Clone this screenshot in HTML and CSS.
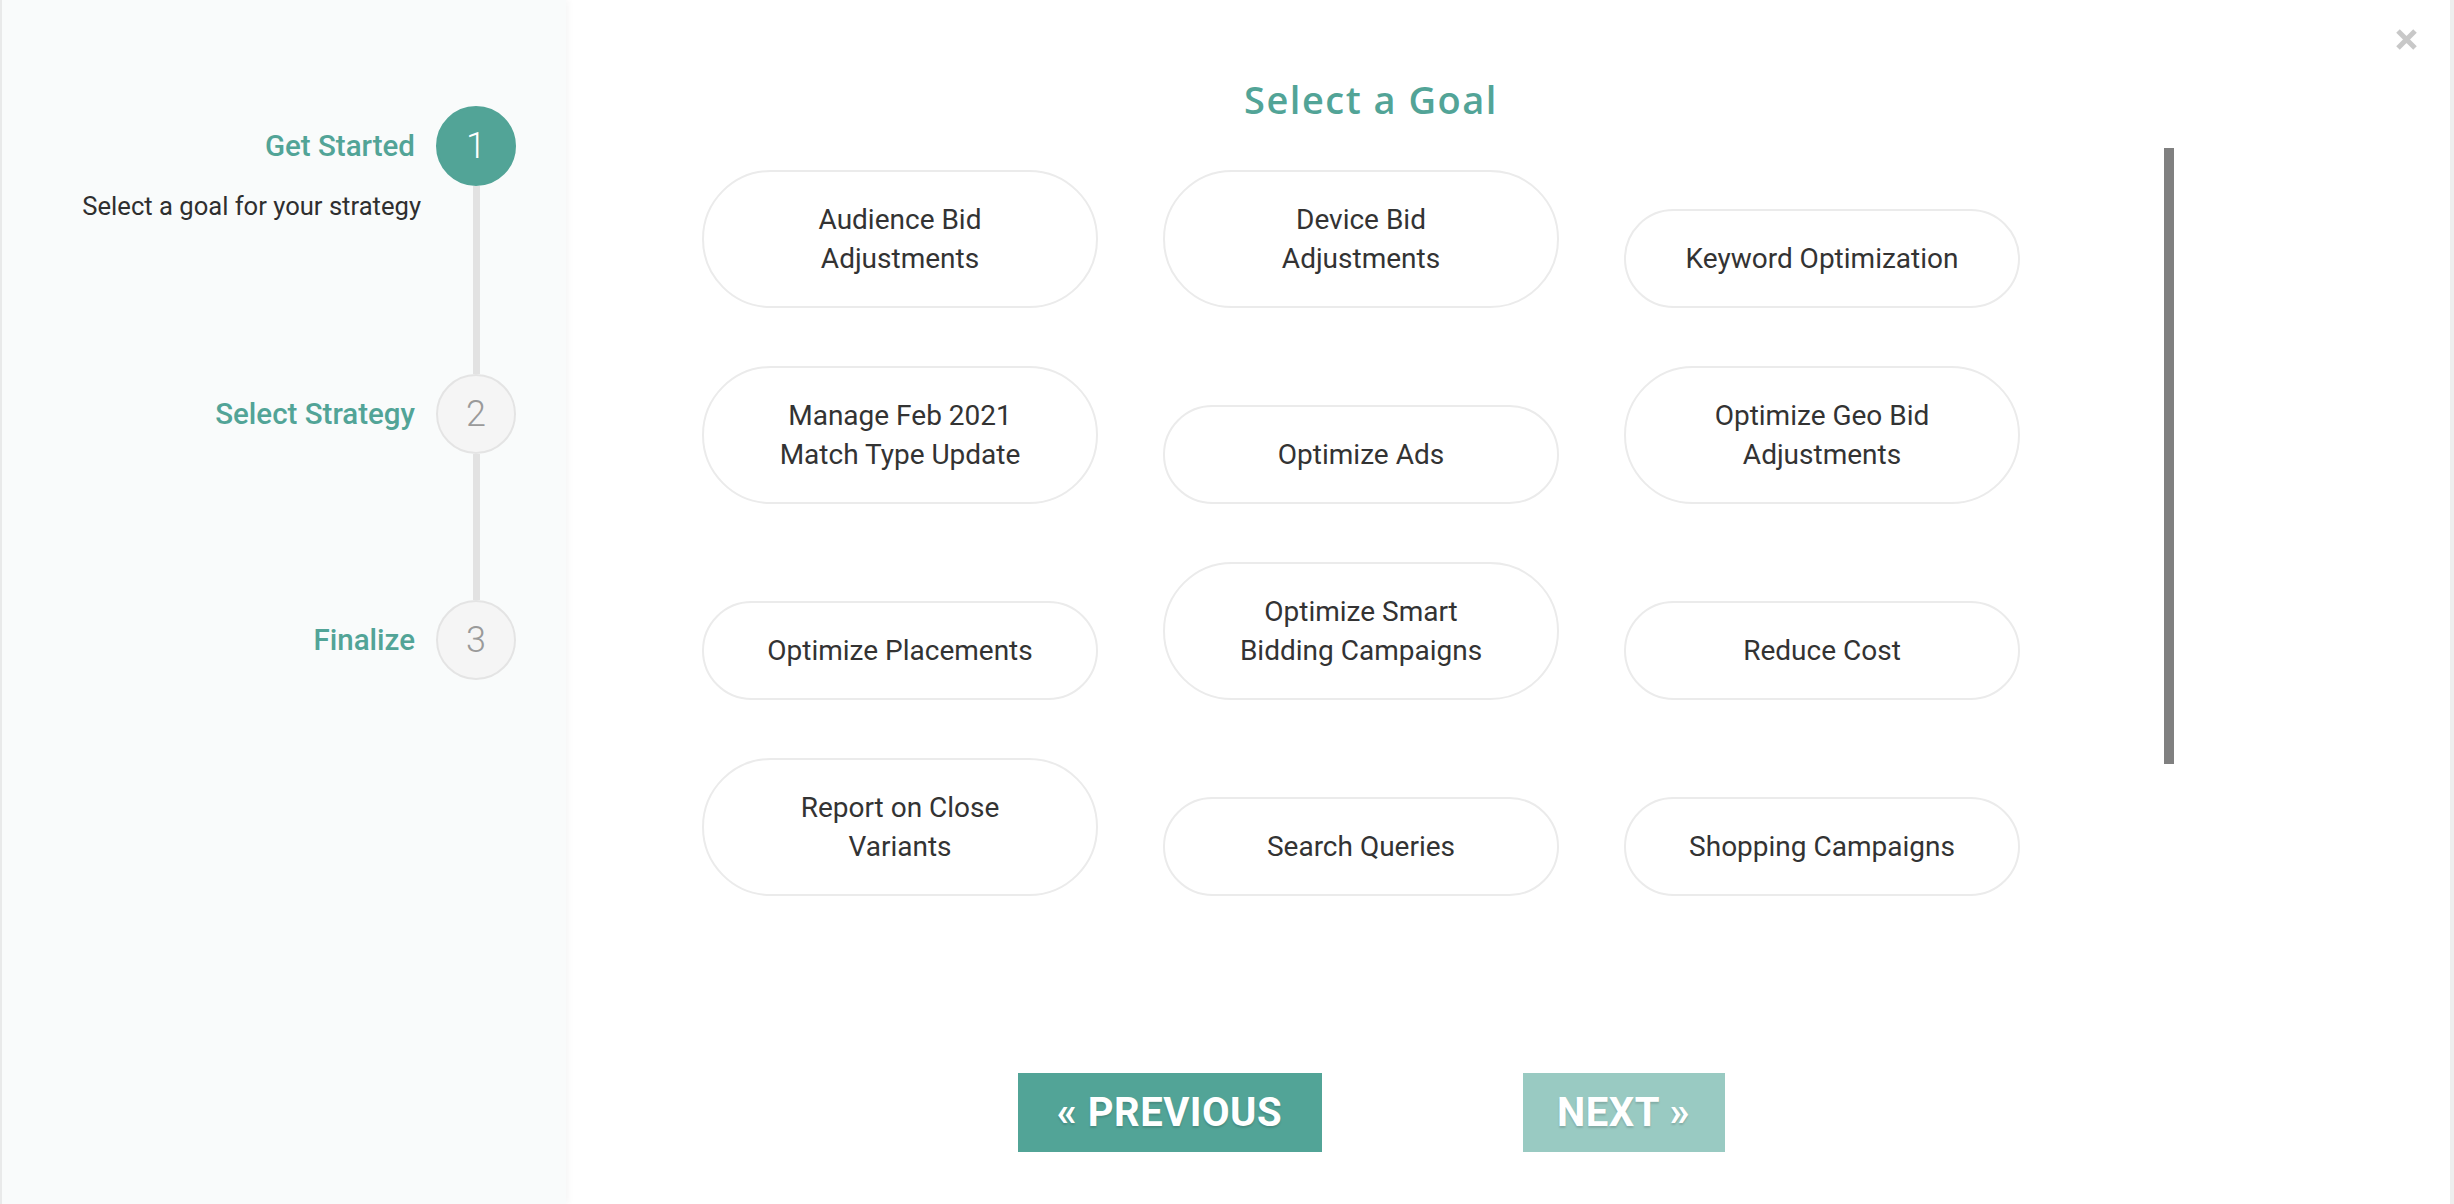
FILE: index.html
```html
<!DOCTYPE html>
<html lang="en">
<head>
<meta charset="utf-8">
<title>Select a Goal</title>
<link rel="stylesheet" href="styles.css">
</head>
<body>
<div class="modal">
  <aside class="sidebar">
    <div class="step">
      <div class="step-text">
        <div class="step-title">Get Started</div>
        <div class="step-desc">Select a goal for your strategy</div>
      </div>
      <div class="marker">
        <div class="circle active">1</div>
        <div class="line"></div>
      </div>
    </div>
    <div class="step">
      <div class="step-text">
        <div class="step-title">Select Strategy</div>
      </div>
      <div class="marker">
        <div class="circle">2</div>
        <div class="line"></div>
      </div>
    </div>
    <div class="step last">
      <div class="step-text">
        <div class="step-title">Finalize</div>
      </div>
      <div class="marker">
        <div class="circle">3</div>
      </div>
    </div>
  </aside>

  <main class="content">
    <h1 class="title">Select a Goal</h1>
    <div class="scroll-row">
      <div class="goals">
        <div class="pill">Audience Bid<br>Adjustments</div>
        <div class="pill">Device Bid<br>Adjustments</div>
        <div class="pill">Keyword Optimization</div>
        <div class="pill">Manage Feb 2021<br>Match Type Update</div>
        <div class="pill">Optimize Ads</div>
        <div class="pill">Optimize Geo Bid<br>Adjustments</div>
        <div class="pill">Optimize Placements</div>
        <div class="pill">Optimize Smart<br>Bidding Campaigns</div>
        <div class="pill">Reduce Cost</div>
        <div class="pill">Report on Close<br>Variants</div>
        <div class="pill">Search Queries</div>
        <div class="pill">Shopping Campaigns</div>
      </div>
      <div class="scrollbar"></div>
    </div>
    <div class="footer">
      <button class="btn btn-prev">« PREVIOUS</button>
      <button class="btn btn-next">NEXT »</button>
    </div>
  </main>

  <div class="spacer"></div>

  <button class="close" aria-label="Close">
    <svg width="23" height="23" viewBox="0 0 23 23">
      <path d="M3 3 L20 20 M20 3 L3 20" stroke="#c8c8c8" stroke-width="5" stroke-linecap="butt" fill="none"/>
    </svg>
  </button>
</div>
</body>
</html>
```

FILE: styles.css
```css
* { box-sizing: border-box; }

html, body {
  margin: 0;
  padding: 0;
  background: #ffffff;
  font-family: Roboto, "Liberation Sans", Arial, sans-serif;
}

.modal {
  position: relative;
  display: flex;
  width: 2454px;
  height: 1204px;
  border-left: 2px solid #e9eaea;
  border-right: 4px solid #eeeeee;
  background: #ffffff;
  overflow: hidden;
}

/* ---------- sidebar ---------- */
.sidebar {
  width: 564px;
  flex: 0 0 564px;
  background: #f9fbfb;
  box-shadow: 3px 0 6px rgba(0, 0, 0, 0.035);
  padding: 106px 50px 0 0;
  position: relative;
  z-index: 1;
}

.step {
  display: flex;
  justify-content: flex-end;
}

.step-text {
  text-align: right;
  margin-right: 21px;
  padding-bottom: 146px;
}

.step.last .step-text { padding-bottom: 0; }

.step-title {
  height: 80px;
  line-height: 80px;
  font-size: 29.5px;
  font-weight: 500;
  color: #52a497;
  white-space: nowrap;
}

.step-desc {
  margin: 2px -6px 4px 0;
  font-size: 25.6px;
  line-height: 36px;
  color: #2f2f2f;
  white-space: nowrap;
}

.marker {
  width: 80px;
  display: flex;
  flex-direction: column;
  align-items: center;
}

.circle {
  width: 80px;
  height: 80px;
  flex: 0 0 80px;
  border-radius: 50%;
  background: #f5f5f5;
  border: 2px solid #e4e4e4;
  color: #9a9a9a;
  font-size: 36px;
  font-weight: 300;
  display: flex;
  align-items: center;
  justify-content: center;
}

.circle.active {
  background: #52a497;
  border-color: #52a497;
  color: #ffffff;
}

.line {
  width: 7px;
  flex: 1;
  background: #e2e2e2;
}

/* ---------- main content ---------- */
.content {
  width: 1610px;
  flex: 0 0 1610px;
  display: flex;
  flex-direction: column;
  padding-top: 74px;
}

.title {
  margin: 0;
  text-align: center;
  font-family: "Open Sans", "Liberation Sans", sans-serif;
  font-weight: 600;
  font-size: 38px;
  line-height: 50px;
  letter-spacing: 1.5px;
  color: #52a497;
}

.scroll-row {
  display: flex;
  align-items: flex-start;
  height: 899px;
  padding-left: 136px;
}

.goals {
  display: grid;
  grid-template-columns: repeat(3, 396px);
  column-gap: 65px;
  row-gap: 58px;
  align-items: end;
  padding-top: 46px;
}

.pill {
  border: 2px solid #ebebeb;
  border-radius: 80px;
  padding: 28px 20px;
  text-align: center;
  font-size: 28px;
  line-height: 39px;
  color: #333333;
  background: #ffffff;
}

.scrollbar {
  width: 10px;
  height: 616px;
  margin-top: 24px;
  margin-left: 144px;
  background: #808080;
}

.footer {
  display: flex;
  justify-content: center;
  gap: 201px;
  padding-top: 50px;
}

.btn {
  height: 79px;
  border: none;
  margin: 0;
  padding: 0;
  font-family: Roboto, "Liberation Sans", sans-serif;
  font-size: 40px;
  font-weight: 700;
  letter-spacing: 0.5px;
  color: #ffffff;
  text-shadow: 0 2px 2px rgba(0, 0, 0, 0.15);
  cursor: pointer;
}

.btn-prev {
  width: 304px;
  background: #52a497;
}

.btn-next {
  width: 202px;
  background: #99cac2;
}

.spacer { flex: 1; }

.close {
  position: absolute;
  top: 28px;
  right: 32px;
  width: 23px;
  height: 23px;
  padding: 0;
  border: none;
  background: transparent;
  line-height: 0;
}
```
